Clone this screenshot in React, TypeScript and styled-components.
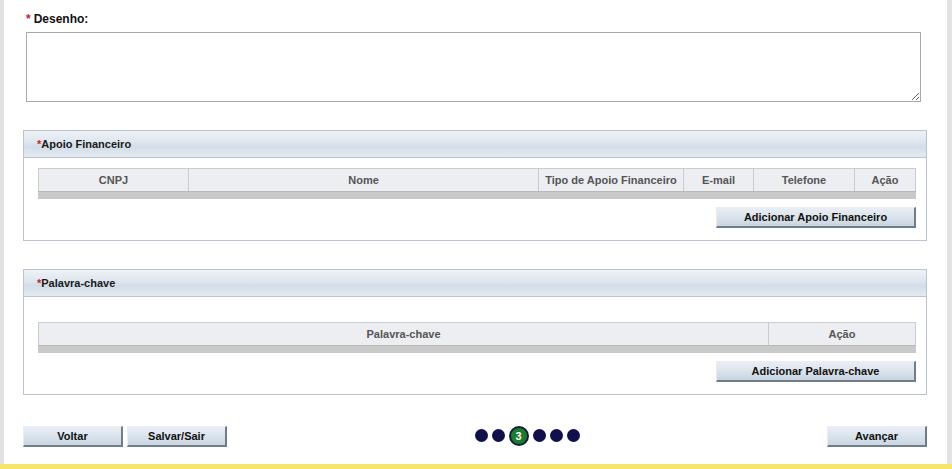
import { FC } from 'react'
import styled, { createGlobalStyle } from 'styled-components'

const GlobalStyle = createGlobalStyle`
  html, body {
    margin: 0;
    padding: 0;
    background: #ffffff;
    font-family: 'Liberation Sans', Arial, sans-serif;
  }
`

const Frame = styled.div`
  width: 952px;
  height: 469px;
  display: flex;
  flex-direction: column;
  overflow: hidden;
`

const Body = styled.div`
  flex: 1;
  display: flex;
  border-left: 4px solid #e2e2e2;
  border-right: 5px solid #e2e2e2;
`

const Main = styled.div`
  flex: 1;
  padding: 12px 20px 0 19px;
  display: flex;
  flex-direction: column;
`

const YellowBar = styled.div`
  height: 5px;
  background: #f6e56a;
`

const FieldLabel = styled.div`
  margin-left: 3px;
  font-size: 12px;
  font-weight: bold;
  color: #111;
  height: 14px;
  line-height: 14px;
  display: flex;
  align-items: center;
  gap: 3px;
`

const Star = styled.span`
  color: #c4242a;
  font-weight: bold;
`

const TextArea = styled.textarea`
  margin: 6px 6px 0 3px;
  height: 70px;
  box-sizing: border-box;
  border: 1px solid #a9a9a9;
  resize: vertical;
  font-family: inherit;
`

const Panel = styled.div<{ $bodyTop: number; $top: number }>`
  margin-top: ${(p) => p.$top}px;
  border: 1px solid #b9c4cf;
  display: flex;
  flex-direction: column;
  padding-bottom: 12px;
  & > section {
    padding-top: ${(p) => p.$bodyTop}px;
  }
`

const PanelHeader = styled.div`
  height: 26px;
  border-bottom: 1px solid #b9c4cf;
  background: linear-gradient(#eef2f6 0%, #dde5ee 45%, #d3dde8 60%, #e4eaf1 100%);
  display: flex;
  align-items: center;
  padding-left: 13px;
  font-size: 11px;
  font-weight: bold;
  color: #1a1a1a;
`

const PanelBody = styled.section`
  padding-left: 14px;
  padding-right: 10px;
  display: flex;
  flex-direction: column;
`

const Grid = styled.div<{ $cols: string }>`
  display: grid;
  grid-template-columns: ${(p) => p.$cols};
  border: 1px solid #c8cbd0;
  border-bottom: none;
  background: #eceef2;
`

const HeadCell = styled.div`
  height: 22px;
  display: flex;
  align-items: center;
  justify-content: center;
  font-size: 11px;
  font-weight: bold;
  color: #555;
  border-left: 1px solid #c8cbd0;
  &:first-child {
    border-left: none;
  }
`

const GridFoot = styled.div`
  height: 8px;
  background: #c9c9c9;
  border-top: 1px solid #b8b8b8;
  box-sizing: border-box;
`

const ButtonRow = styled.div`
  display: flex;
  justify-content: flex-end;
  margin-top: 8px;
`

const Button = styled.button<{ $w: number }>`
  width: ${(p) => p.$w}px;
  height: 21px;
  box-sizing: border-box;
  padding: 0;
  font-family: 'Liberation Sans', Arial, sans-serif;
  font-size: 11px;
  font-weight: bold;
  color: #111;
  background: linear-gradient(#e9eef4 0%, #d9e2eb 55%, #c9d5e1 100%);
  border-style: solid;
  border-width: 1px 2px 2px 1px;
  border-color: #e8eef4 #6f7d8a #6f7d8a #e8eef4;
  cursor: pointer;
`

const Footer = styled.div`
  margin-top: 31px;
  display: grid;
  grid-template-columns: auto 1fr auto;
  align-items: center;
`

const LeftButtons = styled.div`
  display: flex;
  gap: 4px;
`

const Steps = styled.div`
  display: flex;
  justify-content: center;
  align-items: center;
  gap: 4px;
  margin-top: -2px;
`

const Dot = styled.span<{ $active?: boolean }>`
  width: ${(p) => (p.$active ? 20 : 13)}px;
  height: ${(p) => (p.$active ? 20 : 13)}px;
  box-sizing: border-box;
  border-radius: 50%;
  background: ${(p) => (p.$active ? '#1e7a2c' : '#10104a')};
  border: ${(p) => (p.$active ? '2px solid #10203a' : 'none')};
  color: #fff;
  font-size: 11px;
  font-weight: bold;
  display: flex;
  align-items: center;
  justify-content: center;
`

const apoioCols = ['CNPJ', 'Nome', 'Tipo de Apoio Financeiro', 'E-mail', 'Telefone', 'Ação']

const App: FC = () => {
  return (
    <Frame>
      <GlobalStyle />
      <Body>
        <Main>
          <FieldLabel>
            <Star>*</Star> Desenho:
          </FieldLabel>
          <TextArea />

          <Panel $top={28} $bodyTop={10}>
            <PanelHeader>
              <Star>*</Star>Apoio Financeiro
            </PanelHeader>
            <PanelBody>
              <Grid $cols="149px 350px 145px 70px 101px 1fr">
                {apoioCols.map((c) => (
                  <HeadCell key={c}>{c}</HeadCell>
                ))}
              </Grid>
              <GridFoot />
              <ButtonRow>
                <Button $w={200}>Adicionar Apoio Financeiro</Button>
              </ButtonRow>
            </PanelBody>
          </Panel>

          <Panel $top={28} $bodyTop={25}>
            <PanelHeader>
              <Star>*</Star>Palavra-chave
            </PanelHeader>
            <PanelBody>
              <Grid $cols="729px 1fr">
                <HeadCell>Palavra-chave</HeadCell>
                <HeadCell>Ação</HeadCell>
              </Grid>
              <GridFoot />
              <ButtonRow>
                <Button $w={200}>Adicionar Palavra-chave</Button>
              </ButtonRow>
            </PanelBody>
          </Panel>

          <Footer>
            <LeftButtons>
              <Button $w={100}>Voltar</Button>
              <Button $w={100}>Salvar/Sair</Button>
            </LeftButtons>
            <Steps>
              <Dot />
              <Dot />
              <Dot $active>3</Dot>
              <Dot />
              <Dot />
              <Dot />
            </Steps>
            <Button $w={100}>Avançar</Button>
          </Footer>
        </Main>
      </Body>
      <YellowBar />
    </Frame>
  )
}

export default App
